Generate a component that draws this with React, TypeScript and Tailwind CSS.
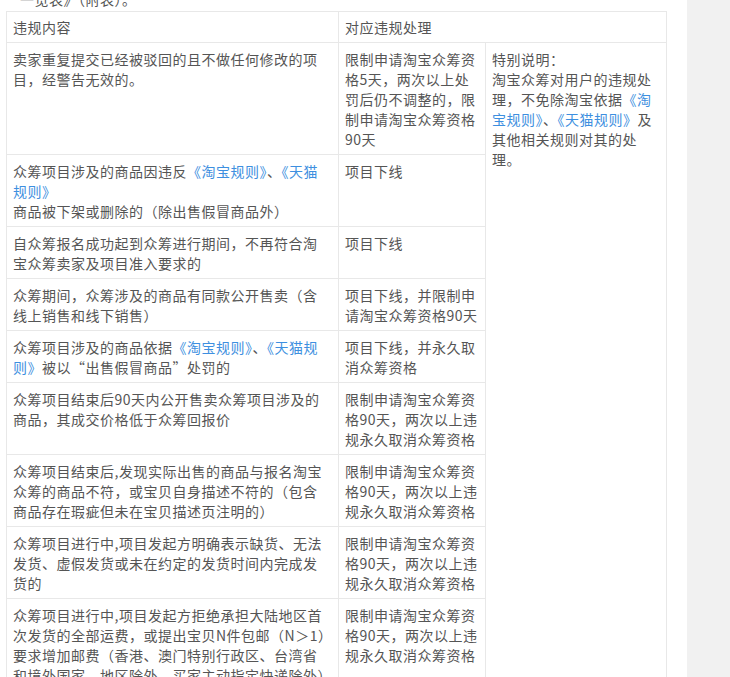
const L = ({ children }: { children: React.ReactNode }) => <span className="text-[#3d8fe0]">{children}</span>;

const rows: [React.ReactNode, React.ReactNode][] = [
  ["卖家重复提交已经被驳回的且不做任何修改的项目，经警告无效的。", "限制申请淘宝众筹资格5天，两次以上处罚后仍不调整的，限制申请淘宝众筹资格90天"],
  [<>众筹项目涉及的商品因违反<L>《淘宝规则》</L>、<L>《天猫规则》</L>商品被下架或删除的（除出售假冒商品外）</>, "项目下线"],
  ["自众筹报名成功起到众筹进行期间，不再符合淘宝众筹卖家及项目准入要求的", "项目下线"],
  ["众筹期间，众筹涉及的商品有同款公开售卖（含线上销售和线下销售）", "项目下线，并限制申请淘宝众筹资格90天"],
  [<>众筹项目涉及的商品依据<L>《淘宝规则》</L>、<L>《天猫规则》</L>被以“出售假冒商品”处罚的</>, "项目下线，并永久取消众筹资格"],
  ["众筹项目结束后90天内公开售卖众筹项目涉及的商品，其成交价格低于众筹回报价", "限制申请淘宝众筹资格90天，两次以上违规永久取消众筹资格"],
  ["众筹项目结束后,发现实际出售的商品与报名淘宝众筹的商品不符，或宝贝自身描述不符的（包含商品存在瑕疵但未在宝贝描述页注明的）", "限制申请淘宝众筹资格90天，两次以上违规永久取消众筹资格"],
  ["众筹项目进行中,项目发起方明确表示缺货、无法发货、虚假发货或未在约定的发货时间内完成发货的", "限制申请淘宝众筹资格90天，两次以上违规永久取消众筹资格"],
  ["众筹项目进行中,项目发起方拒绝承担大陆地区首次发货的全部运费，或提出宝贝N件包邮（N＞1）要求增加邮费（香港、澳门特别行政区、台湾省和境外国家、地区除外，买家主动指定快递除外）", "限制申请淘宝众筹资格90天，两次以上违规永久取消众筹资格"],
];

const td = "border border-[#e8e8e8] pl-[6px] pr-[6px] pt-[6px] pb-[5px] align-top";

export default function App() {
  return (
    <div className="flex h-[677px] w-[730px] overflow-hidden bg-white text-[14px] leading-[20px] tracking-[0.5px] text-[#555]" style={{ fontFamily: '"Noto Sans CJK SC", "Liberation Sans", sans-serif' }}>
      <div className="w-[687px] shrink-0 pl-[6px]">
        <div className="-mt-[11px] h-[22px] pl-[14px] text-[#555]">一览表》（附表）。</div>
        <table className="w-[660px] table-fixed border-collapse">
          <colgroup>
            <col className="w-[332px]" />
            <col className="w-[147px]" />
            <col className="w-[181px]" />
          </colgroup>
          <tbody>
            <tr>
              <td className="border border-[#e8e8e8] px-[6px] py-[5px]">违规内容</td>
              <td className="border border-[#e8e8e8] px-[6px] py-[5px]" colSpan={2}>对应违规处理</td>
            </tr>
            {rows.map(([a, b], i) => (
              <tr key={i}>
                <td className={td + " pr-[12px]"}>{a}</td>
                <td className={td}>{b}</td>
                {i === 0 && (
                  <td className={td} rowSpan={rows.length}>
                    特别说明：<br />淘宝众筹对用户的违规处理，不免除淘宝依据<L>《淘宝规则》</L>、<L>《天猫规则》</L>及其他相关规则对其的处理。
                  </td>
                )}
              </tr>
            ))}
          </tbody>
        </table>
      </div>
      <div className="flex-1 bg-[#f1f1f1]" />
    </div>
  );
}
